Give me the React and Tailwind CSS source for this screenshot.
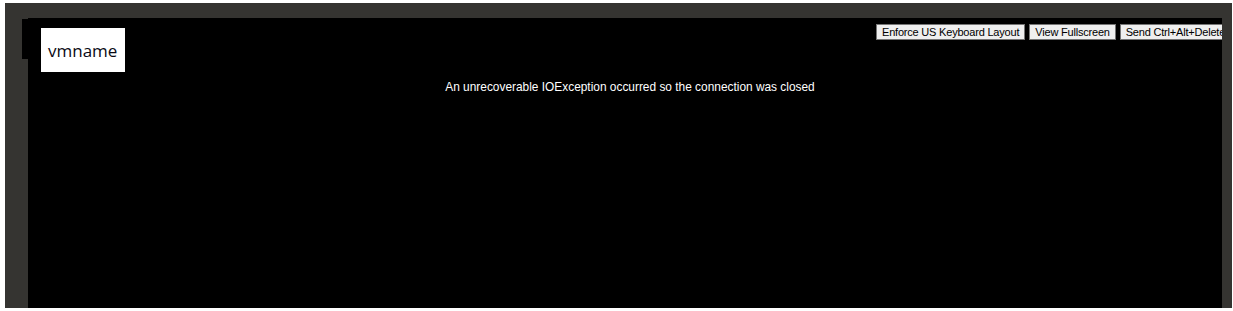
export default function App() {
  const btn =
    "shrink-0 h-[16px] px-[5px] bg-[#efefef] border border-[#767676] text-[11px] tracking-[-0.2px] leading-[14px] text-black whitespace-nowrap";
  return (
    <div className="w-[1233px] h-[311px] bg-white overflow-hidden" style={{ fontFamily: '"Liberation Sans", Arial, sans-serif' }}>
      <div className="ml-[5px] mr-[1px] mt-[3px] h-[305px] bg-[#353431] pt-[15px] flex">
        <div className="ml-[17px] mt-[1px] w-[6px] h-[40px] bg-black shrink-0" />
        <div className="w-[1194px] h-[290px] bg-black relative overflow-hidden">
          <div className="flex items-start">
            <div
              className="shrink-0 mt-[10px] ml-[13px] w-[84px] h-[44px] bg-white pt-[14px] pl-[7px] text-[17px] leading-[17px] text-[#0a0a14]"
              style={{ fontFamily: '"Open Sans", sans-serif' }}
            >
              vmname
            </div>
            <div className="shrink-0 ml-[751px] mt-[6px] flex gap-[4px]">
              <button className={btn}>Enforce US Keyboard Layout</button>
              <button className={btn}>View Fullscreen</button>
              <button className={btn}>Send Ctrl+Alt+Delete</button>
            </div>
          </div>
          <div className="absolute top-[61px] left-0 right-0 text-center text-[11.9px] text-white pl-[10px]">
            An unrecoverable IOException occurred so the connection was closed
          </div>
        </div>
      </div>
    </div>
  );
}
